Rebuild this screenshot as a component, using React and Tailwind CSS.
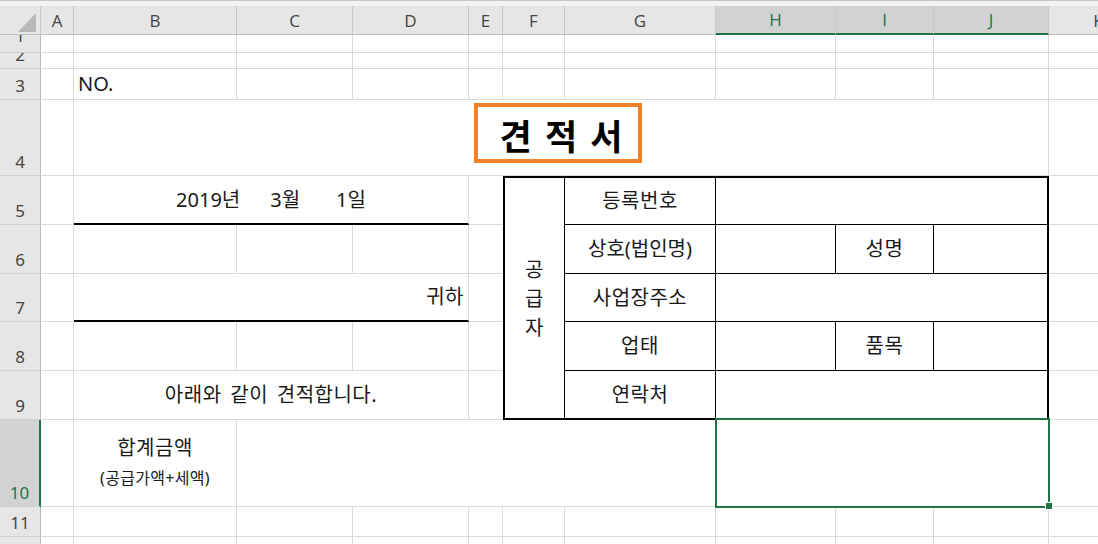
import React from "react";
import { twMerge } from "tailwind-merge";

const FONT = "font-['Noto_Sans','Noto_Sans_CJK_KR',sans-serif]";

// plain worksheet cell, gray gridline on right + bottom
const Cell = ({ className, children }) => (
  <div
    className={twMerge(
      "flex items-center overflow-hidden border-r border-b border-[#dadada] text-[20px] tracking-[0.5px] [word-spacing:3px] text-[#1a1a1a]",
      className
    )}
  >
    {children}
  </div>
);

const ColHead = ({ label, sel }) => (
  <div
    className={twMerge(
      "flex items-center justify-center overflow-hidden border-r border-b border-r-[#c8c8c8] border-b-[#bdbdbd] bg-[#e6e6e6] pt-px font-['Open_Sans',sans-serif] text-[17px] text-[#444]",
      sel && "bg-[#d2d2d2] text-[#217346] border-b-2 border-b-[#217346]"
    )}
  >
    {label}
  </div>
);

const RowHead = ({ n, sel, className }) => (
  <div
    className={twMerge(
      "flex items-end justify-center overflow-hidden border-r border-b border-r-[#bdbdbd] border-b-[#d0d0d0] bg-[#e6e6e6] pb-[5px] text-[17px] leading-none text-[#444]",
      sel && "bg-[#d2d2d2] text-[#217346] border-r-2 border-r-[#217346]",
      className
    )}
  >
    {n}
  </div>
);

const Blank = ({ count }) =>
  Array.from({ length: count }).map((_, i) => <Cell key={i} />);

const T = "border-black"; // table border color

export default function App() {
  return (
    <div className={`h-[544px] w-[1098px] overflow-hidden bg-white ${FONT}`}>
      <div className="grid w-[1149px] grid-cols-[41px_33px_163px_116px_116px_34px_62px_151px_120px_98px_115px_100px] grid-rows-[6px_29px_18px_16px_31px_76px_49px_49px_48px_49px_49px_87px_30px_30px]">
        {/* strip above headers */}
        <div className="col-span-12 border-t border-[#c6c6c6] bg-[#f3f3f3]" />

        {/* column headers */}
        <div className="relative border-r border-b border-r-[#c8c8c8] border-b-[#bdbdbd] bg-[#e6e6e6]">
          <svg className="absolute inset-0" width="41" height="29" viewBox="0 0 41 29">
            <polygon points="36,7 36,26 18,26" fill="#b8b8b8" />
          </svg>
        </div>
        {["A", "B", "C", "D", "E", "F", "G"].map((l) => (
          <ColHead key={l} label={l} />
        ))}
        <ColHead label="H" sel />
        <ColHead label="I" sel />
        <ColHead label="J" sel />
        <ColHead label="K" />

        {/* row 1 (squeezed, label clipped) */}
        <RowHead n="1" className="pb-[8px]" />
        <Blank count={11} />

        {/* row 2 */}
        <RowHead n="2" />
        <Blank count={11} />

        {/* row 3 */}
        <RowHead n="3" />
        <Cell />
        <Cell className="pl-[4px] tracking-normal">NO.</Cell>
        <Blank count={9} />

        {/* row 4 - title */}
        <RowHead n="4" />
        <Cell />
        <Cell className="relative col-span-9 justify-center">
          <div className="absolute left-[400px] top-[3px] h-[60px] w-[168px] border-4 border-[#f58025]" />
          <span className="text-[35px] font-bold tracking-normal [word-spacing:4px] text-black">견 적 서</span>
        </Cell>
        <Cell />

        {/* row 5 */}
        <RowHead n="5" />
        <Cell />
        <Cell className="col-span-3 justify-center border-b-2 border-b-black tracking-normal">
          <span>2019년</span>
          <span className="ml-[30px]">3월</span>
          <span className="ml-[36px]">1일</span>
        </Cell>
        <Cell className="border-r-0" />
        <Cell className={`row-span-5 flex-col justify-center border-t-2 border-l-2 border-b-2 border-r ${T} leading-[29px]`}>
          <span>공</span>
          <span>급</span>
          <span>자</span>
        </Cell>
        <Cell className={`justify-center border-t-2 border-r border-b ${T}`}>등록번호</Cell>
        <Cell className={`col-span-3 border-t-2 border-r-2 border-b ${T}`} />
        <Cell />

        {/* row 6 */}
        <RowHead n="6" />
        <Cell />
        <Cell />
        <Cell />
        <Cell />
        <Cell className="border-r-0" />
        <Cell className={`justify-center border-r border-b ${T} tracking-normal`}>상호(법인명)</Cell>
        <Cell className={`border-r border-b ${T}`} />
        <Cell className={`justify-center border-r border-b ${T}`}>성명</Cell>
        <Cell className={`border-r-2 border-b ${T}`} />
        <Cell />

        {/* row 7 */}
        <RowHead n="7" />
        <Cell />
        <Cell className="col-span-3 justify-end border-b-2 border-b-black pr-[4px]">귀하</Cell>
        <Cell className="border-r-0" />
        <Cell className={`justify-center border-r border-b ${T}`}>사업장주소</Cell>
        <Cell className={`col-span-3 border-r-2 border-b ${T}`} />
        <Cell />

        {/* row 8 */}
        <RowHead n="8" />
        <Cell />
        <Cell />
        <Cell />
        <Cell />
        <Cell className="border-r-0" />
        <Cell className={`justify-center border-r border-b ${T}`}>업태</Cell>
        <Cell className={`border-r border-b ${T}`} />
        <Cell className={`justify-center border-r border-b ${T}`}>품목</Cell>
        <Cell className={`border-r-2 border-b ${T}`} />
        <Cell />

        {/* row 9 */}
        <RowHead n="9" />
        <Cell />
        <Cell className="col-span-3 justify-center">아래와 같이 견적합니다.</Cell>
        <Cell className="border-r-0" />
        <Cell className={`justify-center border-r border-b-2 ${T}`}>연락처</Cell>
        <Cell className={`col-span-3 border-r-2 border-b-2 ${T}`} />
        <Cell />

        {/* row 10 */}
        <RowHead n="10" sel />
        <Cell />
        <Cell className="flex-col justify-center pb-[4px]">
          <span className="text-[20px] leading-[30px]">합계금액</span>
          <span className="mt-[3px] text-[16px] leading-[24px] tracking-[0.3px]">(공급가액+세액)</span>
        </Cell>
        <Cell className="col-span-5" />
        <Cell className="relative col-span-3 overflow-visible">
          <div className="absolute -top-[2px] -left-px -right-[2px] -bottom-[2px] border-2 border-[#217346]" />
          <div className="absolute -bottom-[4px] -right-[5px] h-[8px] w-[8px] border border-white bg-[#217346]" />
        </Cell>
        <Cell />

        {/* row 11 */}
        <RowHead n="11" />
        <Blank count={11} />

        {/* row 12 */}
        <RowHead n="12" />
        <Blank count={11} />
      </div>
    </div>
  );
}
